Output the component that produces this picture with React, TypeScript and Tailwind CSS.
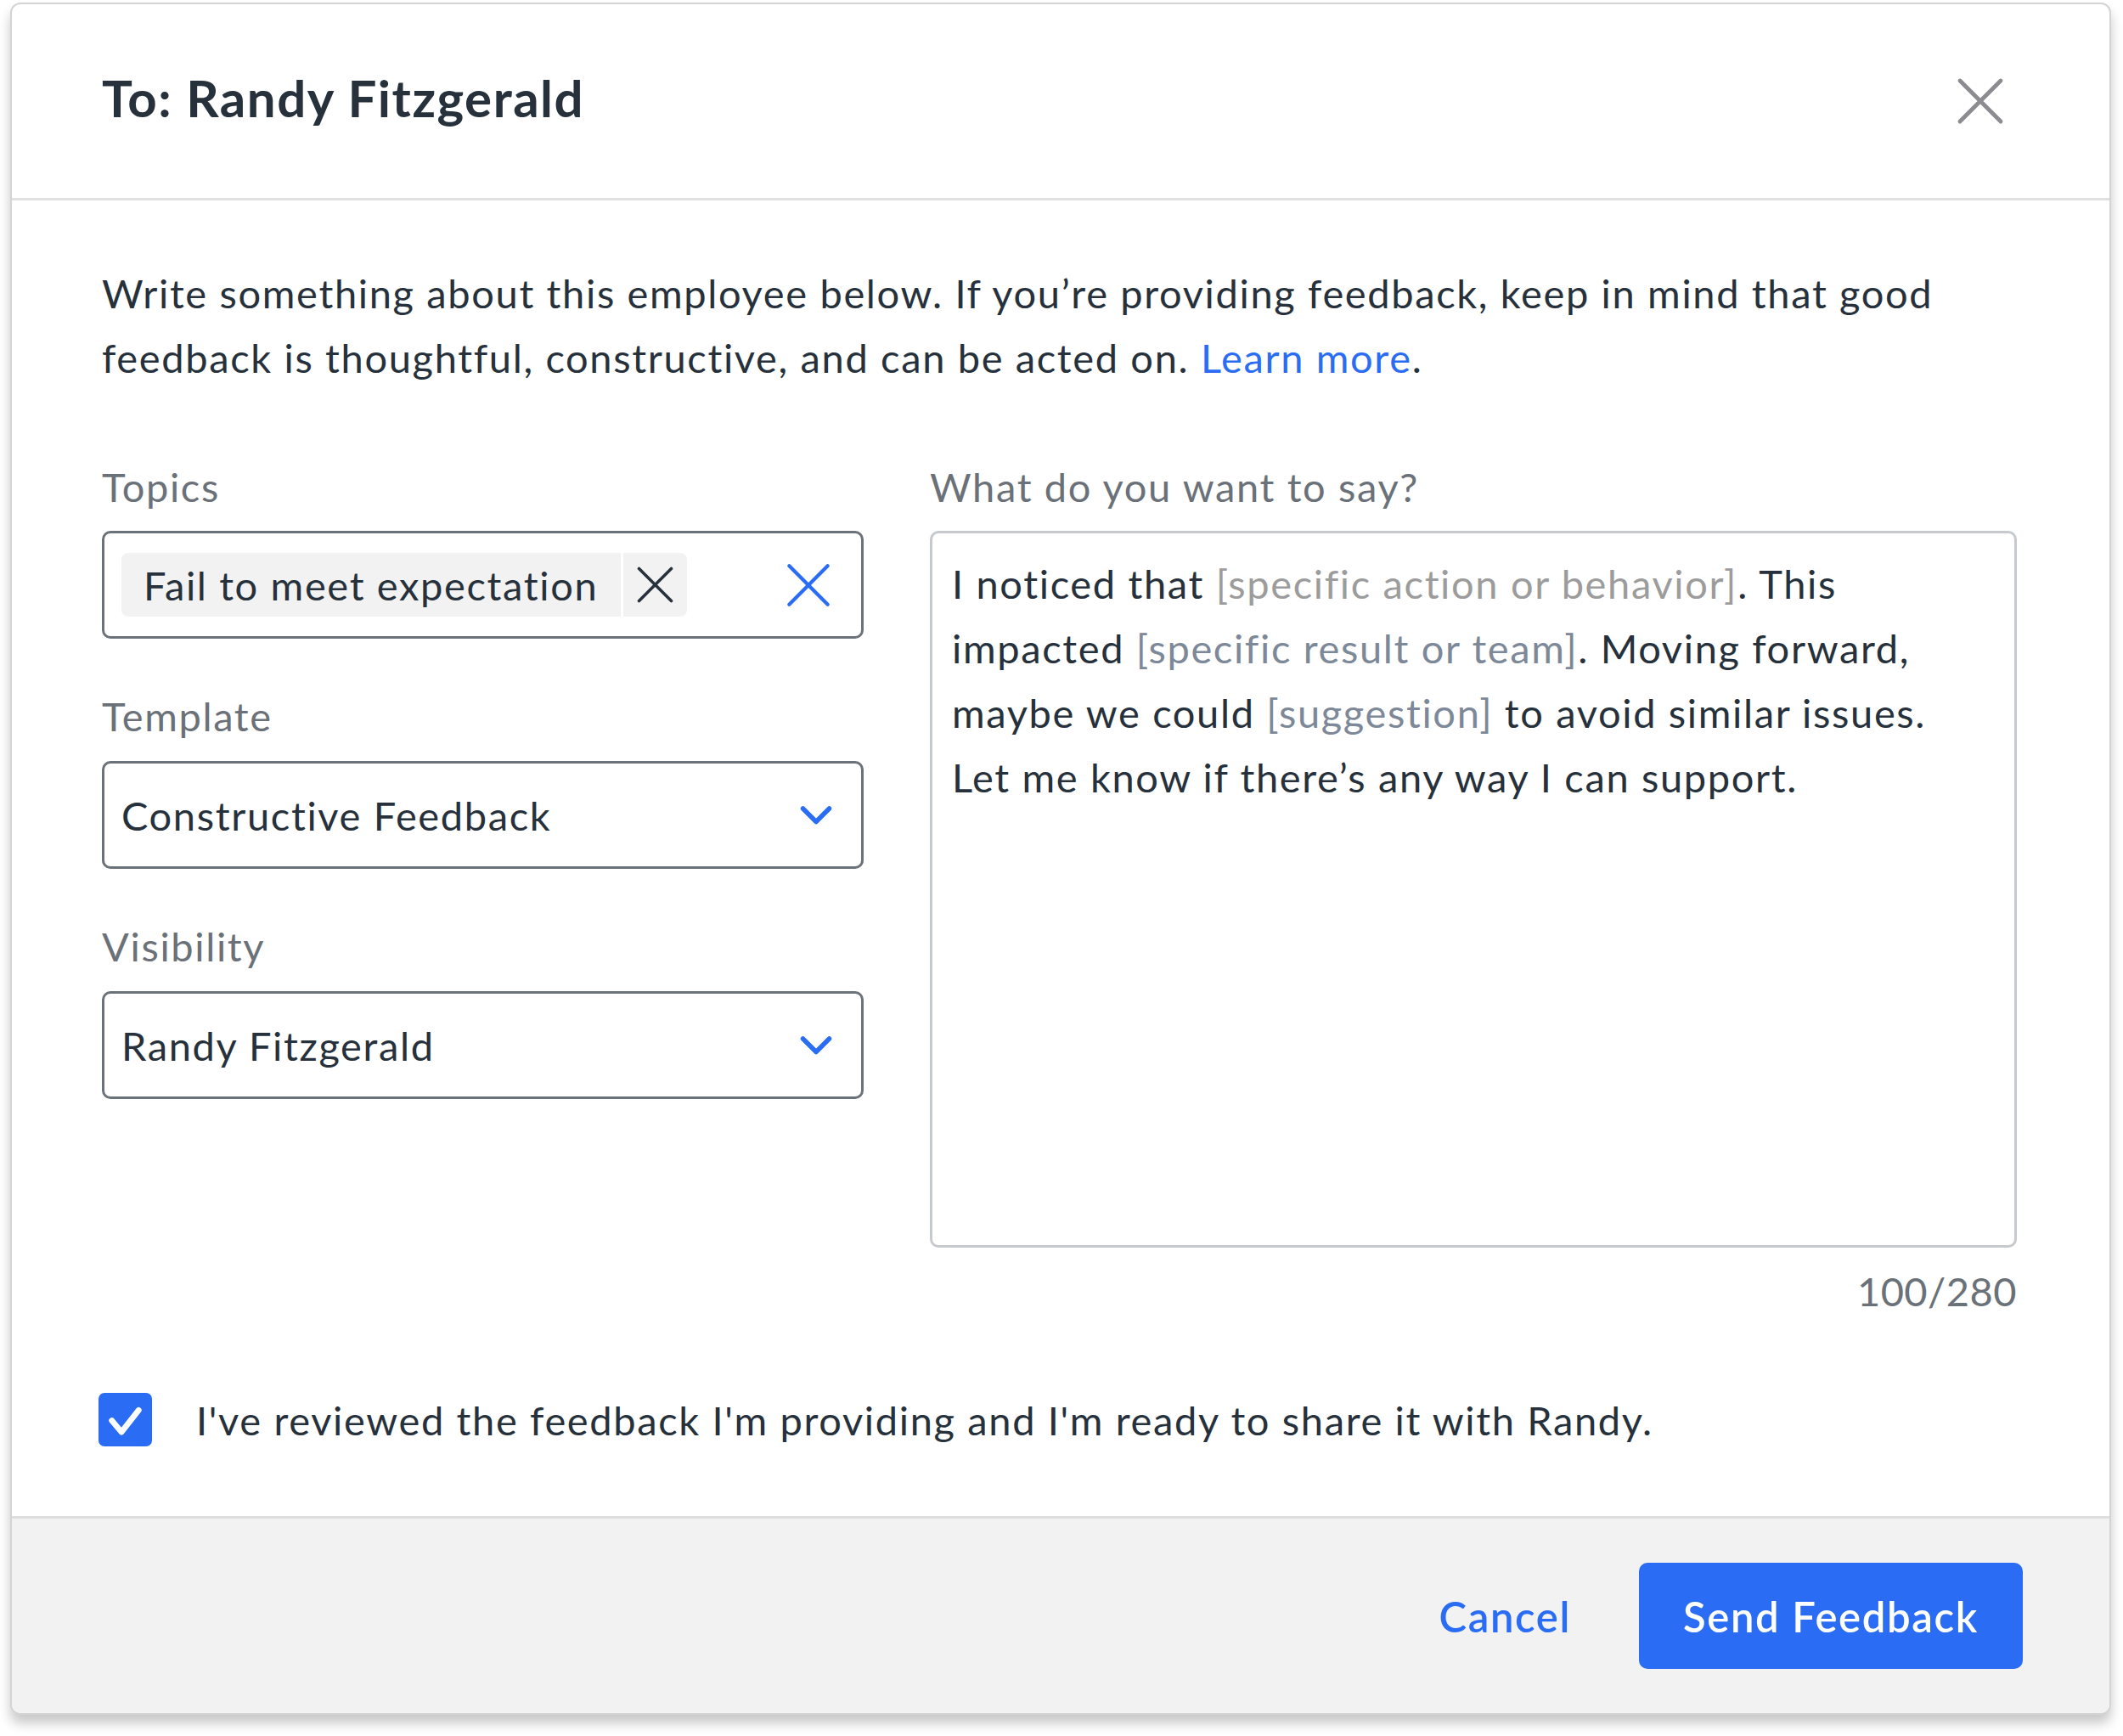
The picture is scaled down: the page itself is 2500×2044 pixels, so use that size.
import React, { useState } from 'react'

const XIcon = ({ className, strokeWidth = 1.6 }: { className?: string; strokeWidth?: number }) => (
  <svg viewBox="0 0 24 24" fill="none" stroke="currentColor" strokeWidth={strokeWidth} strokeLinecap="round" className={className}>
    <path d="M4 4L20 20M20 4L4 20" />
  </svg>
)

const Chevron = () => (
  <svg viewBox="0 0 44 28" fill="none" stroke="#2a6df4" strokeWidth={5.5} strokeLinecap="round" strokeLinejoin="round" className="w-[44px] h-[28px]">
    <path d="M6.5 6L22 21.5L37.5 6" />
  </svg>
)

const Select = ({ value }: { value: string }) => (
  <div className="h-[127px] border-[3px] border-[#6c727a] rounded-[10px] flex items-center justify-between pl-[20px] pr-[31px]">
    <span className="text-[#27313b]">{value}</span>
    <Chevron />
  </div>
)

const App = () => {
  const [checked, setChecked] = useState(true)

  return (
    <div className="min-h-screen bg-white pt-[3px] pl-[12px] pr-[14px] font-[Lato,sans-serif] text-[47px] tracking-[0.035em] leading-[76px] text-[#27313b]">
      <div className="rounded-[12px] border-2 border-[#d4d4d4] bg-white shadow-[0_10px_14px_rgba(0,0,0,0.22)] overflow-hidden">
        <header className="h-[231px] flex items-center justify-between pl-[106px] pr-[116px] border-b-[3px] border-[#e0e0e0]">
          <h1 className="mb-[8px] text-[60px] tracking-[0.025em] font-bold text-[#27313b]">To: Randy Fitzgerald</h1>
          <XIcon className="w-[72px] h-[72px] text-[#8b8b90]" strokeWidth={1.6} />
        </header>

        <div className="pl-[106px] pr-[109px] pt-[71px]">
          <p className="whitespace-nowrap">
            Write something about this employee below. If you’re providing feedback, keep in mind that good
            <br />
            feedback is thoughtful, constructive, and can be acted on. <span className="text-[#2a6df4]">Learn more</span>.
          </p>

          <div className="mt-[86px] grid grid-cols-[897px_1fr] gap-x-[78px]">
            <div>
              <div className="leading-[56px] text-[#6b7178] mb-[24px]">Topics</div>
              <div className="h-[127px] border-[3px] border-[#6c727a] rounded-[10px] flex items-center pl-[20px] pr-[28px]">
                <div className="flex h-[75px] rounded-[8px] bg-[#f2f2f2] overflow-hidden">
                  <span className="flex items-center pl-[26px] pr-[27px]">Fail to meet expectation</span>
                  <span className="w-[3px] bg-white" />
                  <span className="w-[75px] flex items-center justify-center">
                    <XIcon className="w-[57px] h-[57px] text-[#27313b]" strokeWidth={1.5} />
                  </span>
                </div>
                <XIcon className="ml-auto w-[68px] h-[68px] text-[#2a6df4]" strokeWidth={1.5} />
              </div>

              <div className="leading-[56px] text-[#6b7178] mt-[63px] mb-[25px]">Template</div>
              <Select value="Constructive Feedback" />

              <div className="leading-[56px] text-[#6b7178] mt-[63px] mb-[25px]">Visibility</div>
              <Select value="Randy Fitzgerald" />
            </div>

            <div>
              <div className="leading-[56px] text-[#6b7178] mb-[24px]">What do you want to say?</div>
              <div className="h-[844px] border-[3px] border-[#c6c9cd] rounded-[10px] px-[23px] pt-[21px] whitespace-nowrap">
                I noticed that <span className="text-[#9c9c9c]">[specific action or behavior]</span>. This
                <br />
                impacted <span className="text-[#7d8898]">[specific result or team]</span>. Moving forward,
                <br />
                maybe we could <span className="text-[#7d8898]">[suggestion]</span> to avoid similar issues.
                <br />
                Let me know if there’s any way I can support.
              </div>
              <div className="mt-[23px] leading-[56px] tracking-[0.01em] text-right text-[#6b7178]">100/280</div>
            </div>
          </div>

          <div className="mt-[92px] pb-[82px] flex items-center">
            <button
              onClick={() => setChecked(!checked)}
              className={`ml-[-4px] w-[63px] h-[63px] rounded-[7px] flex items-center justify-center ${checked ? 'bg-[#2a6df4]' : 'bg-white border-[3px] border-[#6c727a]'}`}
            >
              {checked && (
                <svg viewBox="0 0 24 24" fill="none" stroke="white" strokeWidth={2.6} strokeLinecap="round" strokeLinejoin="round" className="w-[63px] h-[63px]">
                  <path d="M6 12.4L10.3 17.6L18 7.8" />
                </svg>
              )}
            </button>
            <span className="ml-[52px] leading-[62px]">I've reviewed the feedback I'm providing and I'm ready to share it with Randy.</span>
          </div>
        </div>

        <footer className="h-[232px] bg-[#f2f2f2] border-t-[3px] border-[#dedede] flex items-center justify-end gap-[80px] pr-[102px] text-[49px]">
          <button className="font-semibold text-[#2a6df4]">Cancel</button>
          <button className="h-[125px] px-[52px] rounded-[10px] bg-[#2a6df4] text-white font-semibold">Send Feedback</button>
        </footer>
      </div>
    </div>
  )
}

export default App
